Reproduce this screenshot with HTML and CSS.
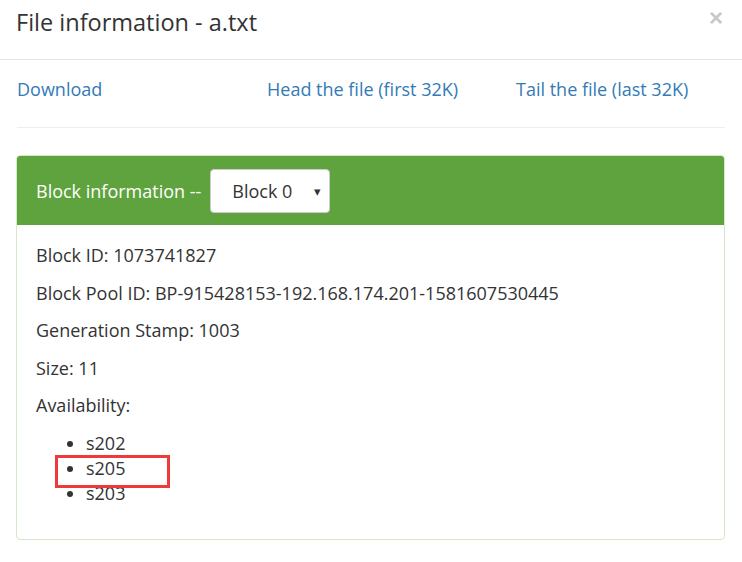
FILE: index.html
```html
<!DOCTYPE html>
<html>
<head>
<meta charset="utf-8">
<link rel="stylesheet" href="styles.css">
</head>
<body>
<div class="modal">
  <div class="modal-header">
    <h4 class="modal-title">File information - a.txt</h4>
    <button class="close" type="button">×</button>
  </div>
  <div class="modal-body">
    <div class="links">
      <a href="#">Download</a>
      <a href="#">Head the file (first 32K)</a>
      <a href="#">Tail the file (last 32K)</a>
    </div>
    <hr class="sep">
    <div class="panel">
      <div class="panel-heading">
        <span class="heading-text">Block information --</span>
        <div class="select"><span>Block 0</span><span class="caret">▾</span></div>
      </div>
      <div class="panel-body">
        <p>Block ID: 1073741827</p>
        <p>Block Pool ID: BP-915428153-192.168.174.201-1581607530445</p>
        <p>Generation Stamp: 1003</p>
        <p>Size: 11</p>
        <p>Availability:</p>
        <ul class="nodes">
          <li>s202</li>
          <li class="marked">s205</li>
          <li>s203</li>
        </ul>
      </div>
    </div>
  </div>
</div>
</body>
</html>
```
FILE: styles.css
```css
* { box-sizing: border-box; }
html, body { margin: 0; padding: 0; background: #fff; }
body {
  font-family: "Open Sans", "Noto Sans", sans-serif;
  font-size: 18px;
  color: #333;
  width: 742px;
  height: 562px;
  overflow: hidden;
}
.modal { width: 742px; }
.modal-header {
  height: 60px;
  border-bottom: 1px solid #e5e5e5;
  display: flex;
  align-items: flex-start;
  justify-content: space-between;
  padding: 6px 19px 0 16px;
}
.modal-title {
  margin: 0;
  font-size: 23.5px;
  font-weight: 400;
  line-height: 32px;
  color: #333;
}
.close {
  border: 0;
  background: none;
  padding: 0;
  font-family: "Liberation Sans", sans-serif;
  font-size: 24px;
  line-height: 24px;
  font-weight: 700;
  color: #c8c8c8;
  margin-top: 0;
}
.modal-body { padding: 17px 17px 0 16px; }
.links {
  display: grid;
  grid-template-columns: 250px 249px 1fr;
  padding-left: 1px;
  line-height: 25px;
}
.links a { color: #337ab7; text-decoration: none; }
.sep {
  margin: 25px 0 27px 1px;
  border: 0;
  border-top: 1px solid #eee;
}
.panel {
  border: 1px solid #d6e9c6;
  border-radius: 4px;
  overflow: hidden;
}
.panel-heading {
  background: #5fa33e;
  color: #fff;
  height: 69px;
  display: flex;
  align-items: center;
  padding: 0 19px;
  gap: 9px;
}
.select {
  width: 120px;
  height: 44px;
  background: #fff;
  border: 1px solid #ccc;
  border-radius: 4px;
  color: #333;
  display: flex;
  align-items: center;
  justify-content: space-between;
  padding: 0 8px 0 21px;
}
.caret { font-size: 13px; }
.panel-body { padding: 18px 19px 21px 19px; }
.panel-body p { margin: 0 0 12.5px 0; line-height: 25px; }
.nodes { margin: 0 0 12.5px 0; padding-left: 50px; line-height: 25px; }
.marked { position: relative; }
.marked::before {
  content: "";
  position: absolute;
  left: -31px;
  top: -1px;
  width: 109px;
  height: 27px;
  border: 3px solid #f03a3a;
}
```
